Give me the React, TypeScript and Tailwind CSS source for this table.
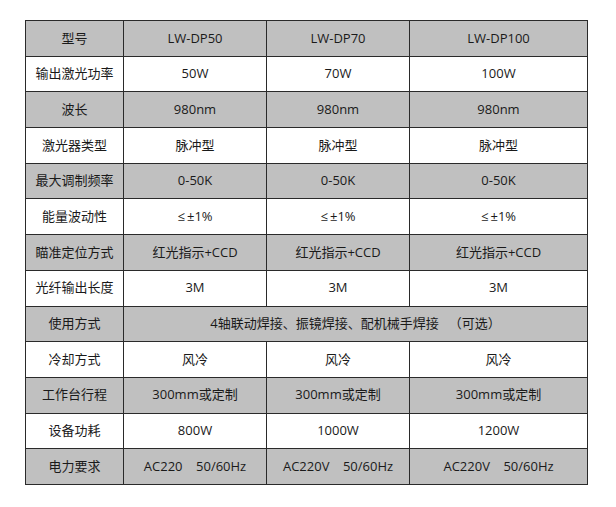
const models = ['LW-DP50', 'LW-DP70', 'LW-DP100']

// 每行: 名称, 各型号值 (单个值 = 合并单元格), 是否灰底
const rows: { label: string; values: string[]; gray: boolean }[] = [
  { label: '输出激光功率', values: ['50W', '70W', '100W'], gray: false },
  { label: '波长', values: ['980nm', '980nm', '980nm'], gray: true },
  { label: '激光器类型', values: ['脉冲型', '脉冲型', '脉冲型'], gray: false },
  { label: '最大调制频率', values: ['0-50K', '0-50K', '0-50K'], gray: true },
  { label: '能量波动性', values: ['≤\u2009±1%', '≤\u2009±1%', '≤\u2009±1%'], gray: false },
  { label: '瞄准定位方式', values: ['红光指示+CCD', '红光指示+CCD', '红光指示+CCD'], gray: true },
  { label: '光纤输出长度', values: ['3M', '3M', '3M'], gray: false },
  { label: '使用方式', values: ['4轴联动焊接、振镜焊接、配机械手焊接\u00a0\u00a0\u00a0（可选）'], gray: true },
  { label: '冷却方式', values: ['风冷', '风冷', '风冷'], gray: false },
  { label: '工作台行程', values: ['300mm或定制', '300mm或定制', '300mm或定制'], gray: true },
  { label: '设备功耗', values: ['800W', '1000W', '1200W'], gray: false },
  { label: '电力要求', values: ['AC220\u00a0\u00a0\u00a0 50/60Hz', 'AC220V\u00a0\u00a0\u00a0 50/60Hz', 'AC220V\u00a0\u00a0\u00a0 50/60Hz'], gray: true },
]

const cell = 'border-[1.5px] border-[#2a2a2a] text-center align-middle p-0'

export default function App() {
  return (
    <div
      className="w-[616px] h-[507px] bg-white pt-[20px] pl-[25px] text-[13px] text-[#1a1a1a]"
      style={{ fontFamily: '"Open Sans", "Noto Sans CJK SC", sans-serif' }}
    >
      <table className="table-fixed border-collapse w-[562px]">
        <colgroup>
          <col className="w-[98px]" />
          <col className="w-[143px]" />
          <col className="w-[143px]" />
          <col className="w-[178px]" />
        </colgroup>
        <tbody>
          <tr className="h-[35.7px] bg-[#c0c0c0]">
            <td className={cell}>型号</td>
            {models.map((m) => (
              <td key={m} className={cell}>{m}</td>
            ))}
          </tr>
          {rows.map((r) => (
            <tr key={r.label} className={r.gray ? 'h-[35.7px] bg-[#c0c0c0]' : 'h-[35.7px] bg-white'}>
              <td className={cell}>{r.label}</td>
              {r.values.length === 1 ? (
                <td colSpan={3} className={cell}>{r.values[0]}</td>
              ) : (
                r.values.map((v, i) => (
                  <td key={i} className={cell}>{v}</td>
                ))
              )}
            </tr>
          ))}
        </tbody>
      </table>
    </div>
  )
}
